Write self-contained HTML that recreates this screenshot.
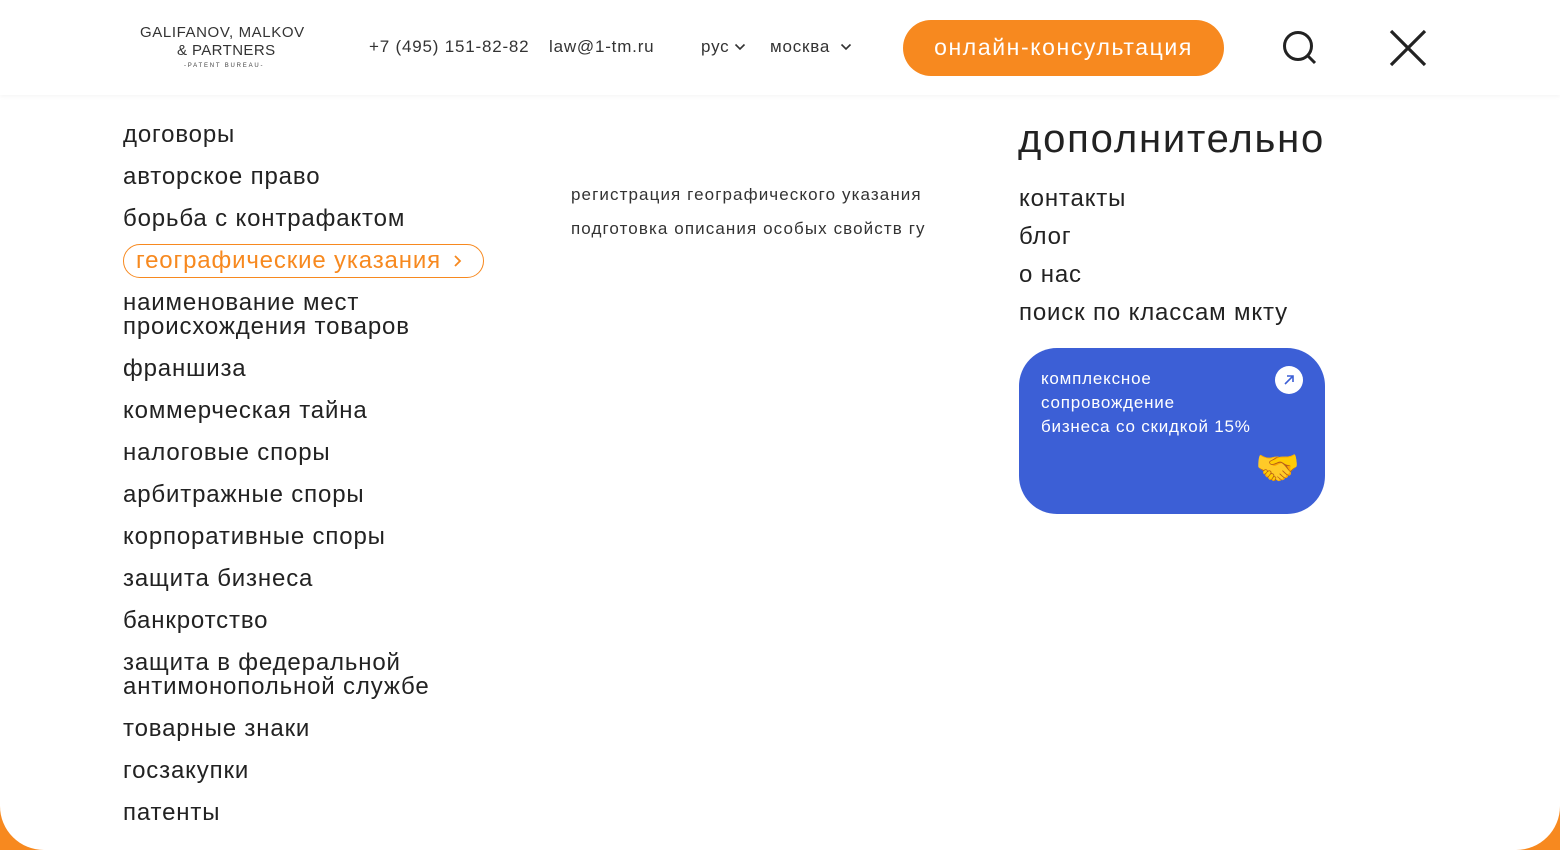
<!DOCTYPE html>
<html><head><meta charset="utf-8"><style>
*{margin:0;padding:0;box-sizing:border-box}
body{width:1560px;height:850px;overflow:hidden;background:#f7891f;font-family:"Liberation Sans","DejaVu Sans",sans-serif;color:#222;position:relative}
.panel{position:absolute;left:0;top:0;width:1560px;height:850px;background:#fff;border-radius:0 0 44px 44px}
.hdr{position:absolute;left:0;top:0;width:1560px;height:95px;background:#fff;box-shadow:0 2px 4px rgba(0,0,0,.04)}
.a{position:absolute;white-space:nowrap}
.m{position:absolute;left:123px;font-size:24px;line-height:24px;color:#222;letter-spacing:.85px}
.r{position:absolute;left:1019px;font-size:24px;line-height:24px;color:#222;letter-spacing:.85px}
.s{position:absolute;left:571px;font-size:17px;color:#333;letter-spacing:1.1px}
.h{font-size:17px;color:#333;letter-spacing:.8px}
</style></head><body>
<div class="panel"></div>
<div class="hdr">
 <div class="a" style="left:140px;top:24px;font-size:15px;letter-spacing:.6px;color:#333">GALIFANOV, MALKOV</div>
 <div class="a" style="left:177px;top:42px;font-size:15px;letter-spacing:.4px;color:#333">&amp; PARTNERS</div>
 <div class="a" style="left:184px;top:63px;font-size:6px;letter-spacing:1.8px;color:#444">-PATENT BUREAU-</div>
 <div class="a h" style="left:369px;top:37px">+7 (495) 151-82-82</div>
 <div class="a h" style="left:549px;top:37px">law@1-tm.ru</div>
 <div class="a h" style="left:701px;top:37px">рус</div>
 <svg class="a" style="left:734px;top:43px" width="12" height="8"><path d="M1.5 1.5l4.5 4.5 4.5-4.5" stroke="#333" stroke-width="1.6" fill="none"/></svg>
 <div class="a h" style="left:770px;top:37px">москва</div>
 <svg class="a" style="left:840px;top:43px" width="12" height="8"><path d="M1.5 1.5l4.5 4.5 4.5-4.5" stroke="#333" stroke-width="1.6" fill="none"/></svg>
 <div class="a" style="left:903px;top:20px;width:321px;height:56px;border-radius:28px;background:#f7891f;color:#fff;font-size:23px;letter-spacing:1.6px;text-align:center;line-height:55px">онлайн-консультация</div>
 <svg class="a" style="left:1281px;top:30px" width="38" height="36"><circle cx="17" cy="16" r="13.5" stroke="#222" stroke-width="3" fill="none"/><path d="M27 26l7 7" stroke="#222" stroke-width="3"/></svg>
 <svg class="a" style="left:1388px;top:28px" width="40" height="40"><path d="M3 3l34 34M37 3L3 37" stroke="#222" stroke-width="3.2"/></svg>
</div>
<div class="m" style="top:123px">договоры</div>
<div class="m" style="top:165px">авторское право</div>
<div class="m" style="top:207px">борьба с контрафактом</div>
<div class="a" style="left:123px;top:244px;width:361px;height:34px;border:1px solid #f7891f;border-radius:17px"></div>
<div class="m" style="top:249px;left:136px;color:#f7891f">географические указания</div>
<svg class="a" style="left:453px;top:254px" width="10" height="14"><path d="M2 2l5 5-5 5" stroke="#f7891f" stroke-width="1.8" fill="none"/></svg>
<div class="m" style="top:291px">наименование мест<br>происхождения товаров</div>
<div class="m" style="top:357px">франшиза</div>
<div class="m" style="top:399px">коммерческая тайна</div>
<div class="m" style="top:441px">налоговые споры</div>
<div class="m" style="top:483px">арбитражные споры</div>
<div class="m" style="top:525px">корпоративные споры</div>
<div class="m" style="top:567px">защита бизнеса</div>
<div class="m" style="top:609px">банкротство</div>
<div class="m" style="top:651px">защита в федеральной<br>антимонопольной службе</div>
<div class="m" style="top:717px">товарные знаки</div>
<div class="m" style="top:759px">госзакупки</div>
<div class="m" style="top:801px">патенты</div>
<div class="s" style="top:185px">регистрация географического указания</div>
<div class="s" style="top:219px">подготовка описания особых свойств гу</div>
<div class="a" style="left:1018px;top:117px;font-size:40px;color:#222;letter-spacing:1.8px">дополнительно</div>
<div class="r" style="top:187px">контакты</div>
<div class="r" style="top:225px">блог</div>
<div class="r" style="top:263px">о нас</div>
<div class="r" style="top:301px">поиск по классам мкту</div>
<div class="a" style="left:1019px;top:348px;width:306px;height:166px;border-radius:38px;background:#3c5fd6"></div>
<div class="a" style="left:1041px;top:367px;font-size:17px;line-height:24px;color:#fff;letter-spacing:.8px">комплексное<br>сопровождение<br>бизнеса со скидкой 15%</div>
<svg class="a" style="left:1275px;top:366px" width="28" height="28"><circle cx="14" cy="14" r="14" fill="#fff"/><path d="M10 18l8-8M12 10h6v6" stroke="#3c5fd6" stroke-width="1.6" fill="none"/></svg>
<div class="a" style="left:1255px;top:448px;font-size:36px;line-height:40px;font-family:'Noto Color Emoji',sans-serif">🤝</div>
</body></html>
